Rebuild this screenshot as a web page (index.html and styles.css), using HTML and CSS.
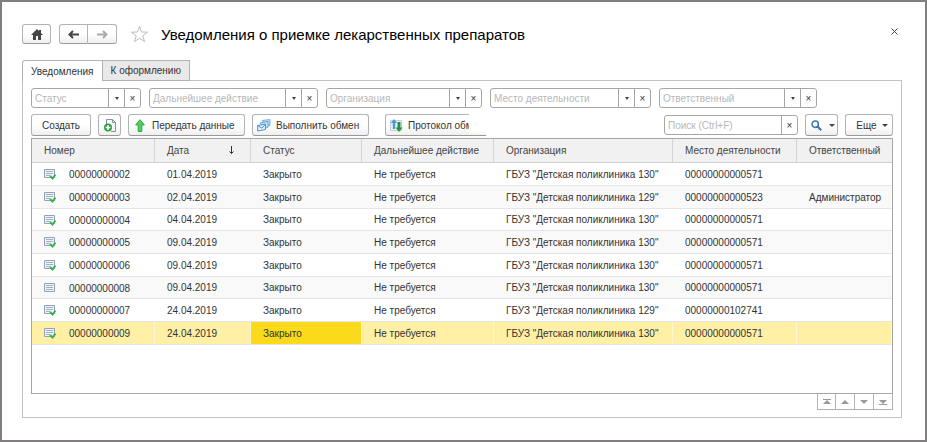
FILE: index.html
```html
<!DOCTYPE html>
<html lang="ru">
<head>
    <meta charset="UTF-8">
    <title>Уведомления о приемке лекарственных препаратов</title>
    <link rel="stylesheet" href="styles.css">
</head>
<body>
    <svg class="sprite" aria-hidden="true">
        <symbol id="doc" viewBox="0 0 12 12">
            <path d="M.5 1.500h10v8H.5z" fill="#eef3f8" stroke="#93a1b5"/>
            <path d="M2 3.500h7M2 5.500h7M2 7.500h7" stroke="#a3b0c1"/>
        </symbol>
        <symbol id="doc-ok" viewBox="0 0 12 12">
            <path d="M.5 1.500h10v8H.5z" fill="#eef3f8" stroke="#93a1b5"/>
            <path d="M2 3.500h7M2 5.500h7M2 7.500h4" stroke="#a3b0c1"/>
            <path d="M6 8l2.500 2.500 3-4" fill="none" stroke="#3bb04f" stroke-width="2"/>
        </symbol>
    </svg>

    <header class="header">
        <button class="btn home" aria-label="Начальная страница">
            <svg width="12" height="11" viewBox="0 0 12 11"><path d="M6 0L0 6h2v5h3V7h2v4h3V6h2L10 4V1H8v1z" fill="#444"/></svg>
        </button>
        <div class="nav">
            <button class="btn" aria-label="Назад">
                <svg width="12" height="9" viewBox="0 0 12 9"><path d="M11 4.500H2M5 1L1.500 4.500 5 8" fill="none" stroke="#444" stroke-width="2"/></svg>
            </button>
            <button class="btn" aria-label="Вперед">
                <svg width="12" height="9" viewBox="0 0 12 9"><path d="M1 4.500h9M7 1l3.500 3.500L7 8" fill="none" stroke="#aaa" stroke-width="2"/></svg>
            </button>
        </div>
        <button class="star" aria-label="В избранное">
            <svg width="19" height="18" viewBox="0 0 19 18"><path d="M9.500 1.500l2 5.500 6 .2-4.700 3.700 1.700 5.700-5-3.400-5 3.400 1.700-5.700L1.500 7.200l6-.2z" fill="#fff" stroke="#bbb"/></svg>
        </button>
        <h1>Уведомления о приемке лекарственных препаратов</h1>
        <button class="close" aria-label="Закрыть">
            <svg width="7" height="7" viewBox="0 0 7 7"><path d="M.5.5l6 6M6.500.5l-6 6" stroke="#444"/></svg>
        </button>
    </header>

    <nav class="tabs">
        <button class="tab active">Уведомления</button>
        <button class="tab">К оформлению</button>
    </nav>

    <main class="panel">
        <div class="filters">
            <div class="field status">
                <input type="text" placeholder="Статус" aria-label="Статус">
                <button class="drop" aria-label="Выбрать"></button>
                <button class="clear" aria-label="Очистить">×</button>
            </div>
            <div class="field action">
                <input type="text" placeholder="Дальнейшее действие" aria-label="Дальнейшее действие">
                <button class="drop" aria-label="Выбрать"></button>
                <button class="clear" aria-label="Очистить">×</button>
            </div>
            <div class="field org">
                <input type="text" placeholder="Организация" aria-label="Организация">
                <button class="drop" aria-label="Выбрать"></button>
                <button class="clear" aria-label="Очистить">×</button>
            </div>
            <div class="field place">
                <input type="text" placeholder="Место деятельности" aria-label="Место деятельности">
                <button class="drop" aria-label="Выбрать"></button>
                <button class="clear" aria-label="Очистить">×</button>
            </div>
            <div class="field person">
                <input type="text" placeholder="Ответственный" aria-label="Ответственный">
                <button class="drop" aria-label="Выбрать"></button>
                <button class="clear" aria-label="Очистить">×</button>
            </div>
        </div>

        <div class="toolbar">
            <button class="btn create">Создать</button>
            <button class="btn copy" aria-label="Создать копированием">
                <svg width="12" height="13" viewBox="0 0 12 13">
                    <path d="M2.500 5V.5h6l3 3v9H7" fill="#f4f7fa" stroke="#8393a7"/>
                    <path d="M8.500.5v3h3" fill="none" stroke="#8393a7"/>
                    <circle cx="4" cy="8.500" r="4" fill="#2f9e44"/>
                    <path d="M4 6v5M1.500 8.500h5" stroke="#fff" stroke-width="1.500"/>
                </svg>
            </button>
            <button class="btn send">
                <svg width="10" height="13" viewBox="0 0 10 13"><path d="M5 .7l4.300 5.200H6.800v6.500H3.200V5.900H.7z" fill="#4fd35b" stroke="#2ba83c"/></svg>
                Передать данные
            </button>
            <button class="btn exchange">
                <svg width="14" height="13" viewBox="0 0 14 13">
                    <path d="M5 1.500l8-1v6l-3 1z" fill="#b9dcf5" stroke="#78b0dd"/>
                    <path d="M3 4l8-1.500V8L8 9.500z" fill="#d3eafa" stroke="#64a3d6"/>
                    <path d="M.7 6.500L8.500 5v5.500L.7 12z" fill="#e7f4fd" stroke="#4b92cd"/>
                    <path d="M.7 6.500L5 9.200 8.500 5" fill="none" stroke="#4b92cd"/>
                </svg>
                Выполнить обмен
            </button>
            <button class="btn log">
                <svg width="13" height="13" viewBox="0 0 13 13">
                    <path d="M.5 1.500h11v10H.5z" fill="#eef2f6" stroke="#c5ced8"/>
                    <path d="M4 0l3.200 4H5.200v6H2.800V4H.8z" fill="#4e9bd3"/>
                    <path d="M9 13l3.500-4.500h-2V3h-3v5.500h-2z" fill="#219447"/>
                </svg>
                Протокол обм
            </button>
            <div class="field search">
                <input type="text" placeholder="Поиск (Ctrl+F)" aria-label="Поиск">
                <button class="clear" aria-label="Очистить">×</button>
            </div>
            <button class="btn find" aria-label="Найти">
                <svg width="11" height="11" viewBox="0 0 11 11"><circle cx="4.200" cy="4.200" r="3.200" fill="none" stroke="#3674ae" stroke-width="1.500"/><path d="M6.500 6.500l3.700 3.700" stroke="#3674ae" stroke-width="2"/></svg>
                <i class="caret"></i>
            </button>
            <button class="btn more">Еще <i class="caret"></i></button>
        </div>

        <div class="list">
            <table>
                <colgroup>
                    <col class="c-num"><col class="c-date"><col class="c-status"><col class="c-action"><col class="c-org"><col class="c-place"><col>
                </colgroup>
                <thead>
                    <tr>
                        <th>Номер</th>
                        <th><div class="sorted">Дата <svg width="5" height="9" viewBox="0 0 5 9"><path d="M2.500 0v7.500M.5 5.500l2 2 2-2" fill="none" stroke="#333"/></svg></div></th>
                        <th>Статус</th>
                        <th>Дальнейшее действие</th>
                        <th>Организация</th>
                        <th>Место деятельности</th>
                        <th>Ответственный</th>
                    </tr>
                </thead>
                <tbody>
                    <tr><td><svg class="mark"><use href="#doc-ok"/></svg>00000000002</td><td>01.04.2019</td><td>Закрыто</td><td>Не требуется</td><td>ГБУЗ "Детская поликлиника 130"</td><td>00000000000571</td><td></td></tr>
                    <tr><td><svg class="mark"><use href="#doc-ok"/></svg>00000000003</td><td>02.04.2019</td><td>Закрыто</td><td>Не требуется</td><td>ГБУЗ "Детская поликлиника 129"</td><td>00000000000523</td><td>Администратор</td></tr>
                    <tr><td><svg class="mark"><use href="#doc-ok"/></svg>00000000004</td><td>04.04.2019</td><td>Закрыто</td><td>Не требуется</td><td>ГБУЗ "Детская поликлиника 130"</td><td>00000000000571</td><td></td></tr>
                    <tr><td><svg class="mark"><use href="#doc-ok"/></svg>00000000005</td><td>09.04.2019</td><td>Закрыто</td><td>Не требуется</td><td>ГБУЗ "Детская поликлиника 130"</td><td>00000000000571</td><td></td></tr>
                    <tr><td><svg class="mark"><use href="#doc-ok"/></svg>00000000006</td><td>09.04.2019</td><td>Закрыто</td><td>Не требуется</td><td>ГБУЗ "Детская поликлиника 130"</td><td>00000000000571</td><td></td></tr>
                    <tr><td><svg class="mark"><use href="#doc"/></svg>00000000008</td><td>09.04.2019</td><td>Закрыто</td><td>Не требуется</td><td>ГБУЗ "Детская поликлиника 130"</td><td>00000000000571</td><td></td></tr>
                    <tr><td><svg class="mark"><use href="#doc-ok"/></svg>00000000007</td><td>24.04.2019</td><td>Закрыто</td><td>Не требуется</td><td>ГБУЗ "Детская поликлиника 129"</td><td>00000000102741</td><td></td></tr>
                    <tr class="selected"><td><svg class="mark"><use href="#doc-ok"/></svg>00000000009</td><td>24.04.2019</td><td class="current">Закрыто</td><td>Не требуется</td><td>ГБУЗ "Детская поликлиника 130"</td><td>00000000000571</td><td></td></tr>
                </tbody>
            </table>
        </div>

        <div class="pager">
            <button aria-label="В начало"><svg width="8" height="6" viewBox="0 0 8 6"><path d="M0 0h8v1H0zM4 1l4 4H0z" fill="#999"/></svg></button>
            <button aria-label="Вверх"><svg width="8" height="6" viewBox="0 0 8 6"><path d="M4 1l4 4H0z" fill="#999"/></svg></button>
            <button aria-label="Вниз"><svg width="8" height="6" viewBox="0 0 8 6"><path d="M4 5L0 1h8z" fill="#999"/></svg></button>
            <button aria-label="В конец"><svg width="8" height="6" viewBox="0 0 8 6"><path d="M0 5h8v1H0zM4 5L0 1h8z" fill="#999"/></svg></button>
        </div>
    </main>
</body>
</html>
```
FILE: styles.css
```css
* {
    box-sizing: border-box;
}

body {
    display: flex;
    flex-direction: column;
    min-height: 100vh;
    margin: 0;
    padding: 21px 23px 22px 20px;
    border: 2px solid #807e7e;
    background: #fff;
    color: #333;
    font-family: "Liberation Sans", Arial, sans-serif;
    font-size: 10px;
}

button,
input {
    margin: 0;
    padding: 0;
    border: none;
    background: none;
    color: inherit;
    font: inherit;
}

svg {
    display: block;
    flex: none;
}

.sprite {
    position: absolute;
    width: 0;
    height: 0;
}

/* Кнопки */
.btn {
    display: flex;
    align-items: center;
    justify-content: center;
    height: 22px;
    border: 1px solid #b3b3b3;
    border-bottom-color: #999;
    border-radius: 3px;
    background: linear-gradient(#fff 50%, #efefef);
    white-space: nowrap;
}

.caret {
    border: 3px solid transparent;
    border-top-color: #444;
    border-bottom: none;
}

/* Заголовок окна */
.header {
    display: flex;
    align-items: center;
    height: 22px;
}

.header .btn {
    height: 20px;
}

.home {
    width: 29px;
    margin-right: 8px;
}

.nav {
    display: flex;
    margin-right: 13px;
}

.nav .btn {
    width: 29px;
}

.nav .btn:first-child {
    border-radius: 3px 0 0 3px;
}

.nav .btn:last-child {
    border-left: none;
    border-radius: 0 3px 3px 0;
}

h1 {
    margin: 0 0 0 12px;
    color: #000;
    font-size: 15px;
    font-weight: normal;
}

.close {
    align-self: flex-start;
    margin: 5px 4px 0 auto;
}

/* Закладки */
.tabs {
    display: flex;
    z-index: 1;
    margin-top: 15px;
}

.tab {
    height: 21px;
    padding: 0 8px;
    border: 1px solid #b3b3b3;
    border-left: none;
    background: #e9e9e9;
}

.tab.active {
    border-bottom: none;
    border-left: 1px solid #b3b3b3;
    border-right-color: #b3b3b3;
    border-radius: 3px 0 0 0;
    background: #fff;
}

.panel {
    display: flex;
    flex: 1;
    flex-direction: column;
    margin-top: -1px;
    padding: 7px 8px;
    border: 1px solid #c4c4c4;
}

/* Поля отбора */
.filters {
    display: flex;
    gap: 8px;
}

.field {
    display: flex;
    height: 20px;
    border: 1px solid #a6a6a6;
    border-radius: 3px;
}

.field input {
    flex: 1;
    min-width: 0;
    padding-left: 3px;
    outline: none;
}

.field input::placeholder {
    color: #b8b8b8;
}

.field button {
    display: flex;
    align-items: center;
    justify-content: center;
    width: 16px;
    border-left: 1px solid #a6a6a6;
}

.drop::before {
    content: "";
    border: 2px solid transparent;
    border-top: 3px solid #444;
    border-bottom: none;
}

.status { width: 110px; }
.action { width: 169px; }
.org { width: 156px; }
.place { width: 161px; }
.person { width: 158px; }

/* Командная панель */
.toolbar {
    display: flex;
    align-items: center;
    gap: 7px;
    margin-top: 6px;
}

.create { width: 60px; }
.copy { width: 23px; }

.send,
.exchange,
.log {
    justify-content: flex-start;
    gap: 5px;
    width: 117px;
    padding-left: 4px;
}

.send {
    gap: 7px;
    padding-left: 6px;
}

.log {
    position: relative;
    width: 101px;
    margin-left: 9px;
    border-right: none;
    border-radius: 3px 0 0 3px;
}

.log::after {
    content: "";
    position: absolute;
    top: -1px;
    right: 0;
    width: 17px;
    height: 21px;
    background: linear-gradient(#fff 80%, #f2f2f2);
}

.search {
    width: 134px;
    margin-left: auto;
}

.find {
    gap: 7px;
    width: 33px;
    padding-left: 2px;
}

.more {
    gap: 5px;
    width: 48px;
    padding-left: 6px;
}

/* Список */
.list {
    flex: 1;
    margin-top: 2px;
    border: 1px solid #a6a6a6;
}

table {
    width: 100%;
    border-collapse: separate;
    border-spacing: 0;
    table-layout: fixed;
}

.c-num { width: 123px; }
.c-date { width: 96px; }
.c-status { width: 111px; }
.c-action { width: 132px; }
.c-org { width: 179px; }
.c-place { width: 124px; }

th,
td {
    padding: 0 0 0 12px;
    text-align: left;
    white-space: nowrap;
}

th {
    height: 24px;
    border-right: 1px solid #d4d4d4;
    border-bottom: 1px solid #d0d0d0;
    background: #f1f1f1;
    color: #444;
    font-weight: normal;
}

td {
    height: 23px;
    border-bottom: 1px solid #e6e6e6;
}

tr:nth-child(3n) td {
    height: 22px;
}

tbody tr:nth-child(even) {
    background: #f9f9f9;
}

th:last-child {
    border-right: none;
}

tbody tr.selected:last-child {
    background: #fff0a5;
}

.selected td {
    border-right: 1px solid #fff8d6;
}

.selected .current {
    background: #fbda1c;
}

.sorted {
    display: flex;
    align-items: center;
    justify-content: space-between;
    padding-right: 16px;
}

.mark {
    display: inline-block;
    width: 12px;
    height: 12px;
    margin-right: 13px;
    vertical-align: text-bottom;
}

/* Прокрутка списка */
.pager {
    display: flex;
    justify-content: flex-end;
}

.pager button {
    display: flex;
    align-items: center;
    justify-content: center;
    width: 19px;
    height: 16px;
    border: 1px solid #b3b3b3;
    border-top: none;
    border-left: none;
}

.pager button:first-child {
    border-left: 1px solid #b3b3b3;
}
```
